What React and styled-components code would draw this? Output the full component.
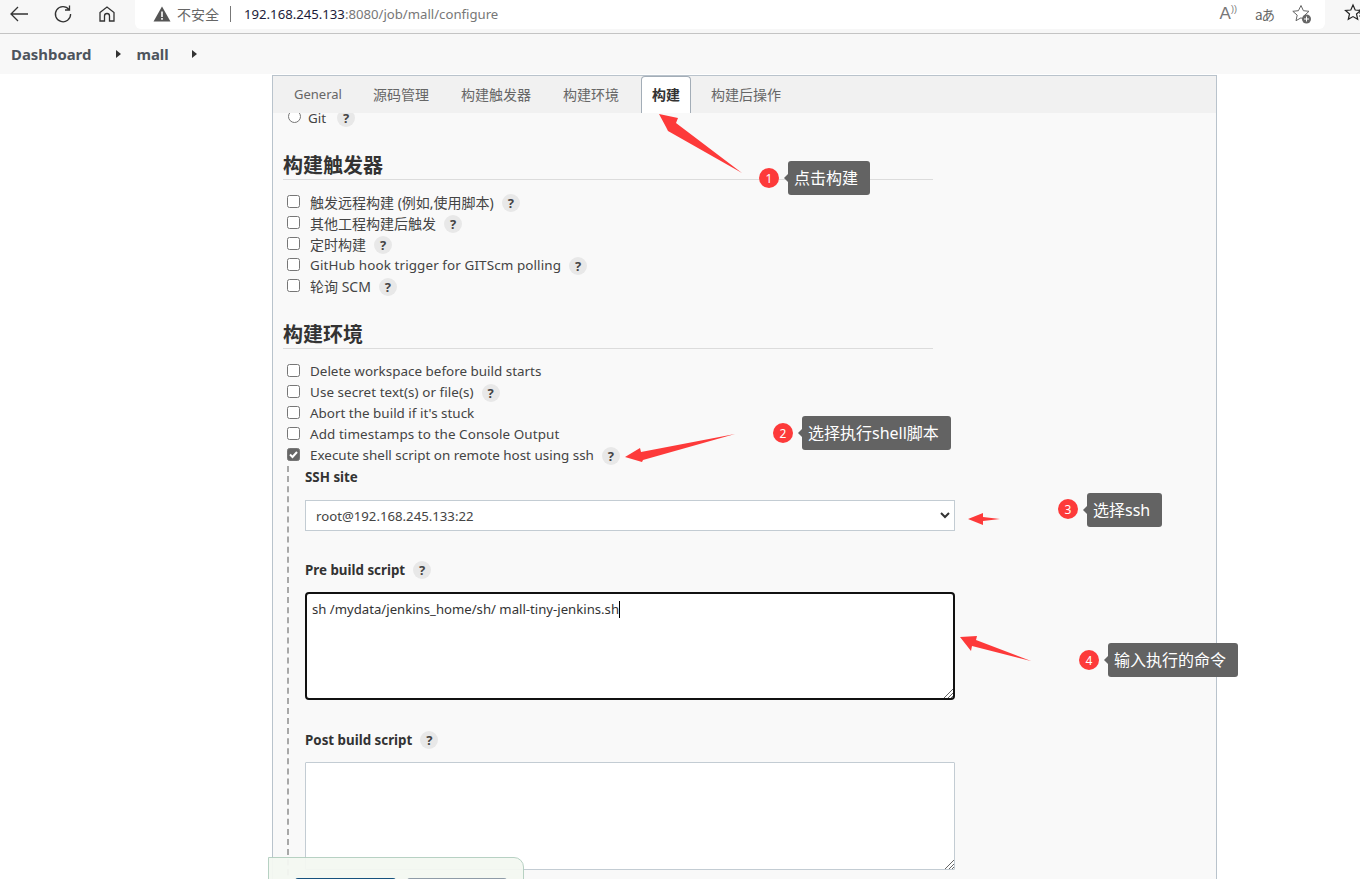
import React from "react";
import styled, { createGlobalStyle } from "styled-components";

const FONT = `"Noto Sans", "Noto Sans CJK SC", sans-serif`;

const Global = createGlobalStyle`
  html, body { margin: 0; padding: 0; height: 879px; overflow: hidden; background: #fff; }
  body { font-family: ${FONT}; font-size: 13.5px; color: #333; }
  * { box-sizing: border-box; }
`;

const Page = styled.div`position: relative; width: 1360px; height: 879px; overflow: hidden;`;
const BrowserBar = styled.header`
  height: 34px; background: #f7f7f7; border-bottom: 1px solid #c4c4c4;
  display: flex; align-items: flex-start; padding-left: 8px;
`;
const NavIcons = styled.div`display: flex; align-items: center; gap: 22px; height: 28px; width: 127px;`;
const NavIcon = styled.svg`width: 22px; height: 22px; fill: none; stroke: ${p => p.$c || "#333"}; stroke-width: 1.3; flex: none;`;
const AddressBar = styled.div`
  width: 1190px; height: 29px; background: #fff; border-radius: 0 0 6px 6px;
  display: flex; align-items: center; padding: 0 0 2px 18px; position: relative;
`;
const Insecure = styled.span`font-size: 14px; color: #666; margin-left: 6px;`;
const Sep = styled.span`width: 1px; height: 16px; background: #777; margin: 0 13px 0 11px;`;
const Host = styled.span`font-size: 13.17px; color: #1b1b3a;`;
const Path = styled.span`font-size: 13.17px; color: #777;`;
const AddrActions = styled.div`margin-left: auto; display: flex; align-items: center; gap: 17px; padding-right: 12px;`;
const ToolIcon = styled.svg`width: 22px; height: 22px; flex: none;`;
const Fav = styled.svg`position: absolute; right: -6px; top: 3px; width: 22px; height: 22px;`;
const AIcon = styled.span`font: 17px "Liberation Sans", sans-serif; color: #777; margin-right: 1px;`;
const TransIcon = styled.span`font: 13.5px "Noto Sans CJK JP", sans-serif; color: #666; letter-spacing: -1px;`;

const Crumbs = styled.nav`
  height: 40px; background: #f8f8f8; display: flex; align-items: center; padding-left: 11px;
  font-size: 14.9px; font-weight: 700; color: #4d545d;
`;
const Crumb = styled.span`margin-right: ${p => p.$gap}px;`;
const Caret = styled.span`
  width: 0; height: 0; border-left: 5px solid #333; border-top: 4px solid transparent; border-bottom: 4px solid transparent;
  margin-right: ${p => p.$gap}px;
`;

const Panel = styled.main`
  margin: 1px 0 0 272px; width: 945px; height: 840px; background: #f9f9f9;
  border: 1px solid #b9c3cc; border-bottom: 0;
`;
const TabBar = styled.div`
  height: 37px; background: #f1f1f1; display: flex; align-items: flex-end; padding-left: 5px; position: relative; z-index: 1;
`;
const Tab = styled.div`
  height: 37px; line-height: 37px; padding: 0 ${p => p.$latin ? 15 : 16}px 0 16px; font-size: ${p => p.$latin ? 13 : 14}px; color: #666; white-space: nowrap;
`;
const ActiveTab = styled(Tab)`
  background: #fff; font-weight: 700; color: #333; padding: 0 10px; margin: 0 4px 0 6px;
  border: 1px solid #a3adb7; border-bottom: 0; border-radius: 4px 4px 0 0; line-height: 35px; height: 37px;
`;
const Content = styled.div`padding: 0 0 0 10px;`;
const GitRow = styled.div`display: flex; align-items: center; height: 21px; margin-top: -6px; padding-left: 5px;`;
const Radio = styled.span`width: 13px; height: 13px; border: 1px solid #767676; border-radius: 50%; background: #fff; margin-top: -2px; flex: none;`;
const GitLabel = styled.span`margin-left: 7px; color: #444; font-size: 13.44px;`;
const SectionTitle = styled.h2`
  margin: ${p => p.$top}px 0 12px; width: 650px; height: 26px; font-size: 20px; font-weight: 700; line-height: 22px; color: #333;
  border-bottom: 1px solid #dcdcdc; font-family: "Noto Sans CJK SC", sans-serif;
`;
const Row = styled.div`display: flex; align-items: center; height: 21px; padding-left: 4px; white-space: nowrap;`;
const Box = styled.span`
  width: 13px; height: 13px; border: 1px solid #767676; border-radius: 2.5px; background: ${p => p.$on ? "#666" : "#fff"};
  flex: none; margin-top: -3px; display: flex; align-items: center; justify-content: center;
`;
const Label = styled.span`
  margin: -2px 0 0 10px; color: #444; font-size: ${p => p.$cjk ? 14 : 13.44}px; letter-spacing: ${p => p.$track || 0}px;
`;
const Help = styled.span`
  width: 18px; height: 18px; border-radius: 50%; background: #e8e8e8; margin-left: ${p => p.$gap ?? 8}px;
  display: inline-flex; align-items: center; justify-content: center; font-size: 13px; font-weight: 700; color: #444; flex: none;
`;
const Nested = styled.div`
  margin-left: 4px; border-left: 2px dashed #a8a8a8; padding: 1px 0 0 16px; height: 500px; width: 668px;
`;
const FieldLabel = styled.div`
  display: flex; align-items: center; height: 20px; font-size: 13.35px; font-weight: 700; color: #333; margin-top: ${p => p.$top}px;
`;
const SelectBox = styled.div`
  margin-top: 13px; width: 650px; height: 31px; background: #fff; border: 1px solid #c3ccd3;
  display: flex; align-items: center; justify-content: space-between; padding: 0 4px 0 10px; font-size: 13.2px; color: #444;
`;
const TextBox = styled.div`
  margin-top: 12px; width: 650px; height: 108px; background: #fff; position: relative;
  border: ${p => p.$focus ? "2px solid #111" : "1px solid #c3ccd3"}; border-radius: ${p => p.$focus ? 4 : 1}px;
  padding: 5px 5px; font-size: 13.17px; line-height: 20px; color: #333;
`;
const Cursor = styled.span`display: inline-block; width: 1px; height: 17px; background: #000; vertical-align: -4px;`;
const Grip = styled.svg`position: absolute; right: 0; bottom: 0; width: 10px; height: 10px; stroke: #666; stroke-width: 1;`;

const Footer = styled.div`
  position: absolute; left: 268px; top: 857px; width: 256px; height: 30px; background: #f4f8f2;
  opacity: .95; border: 1px solid #b4cfc0; border-radius: 0 10px 0 0; z-index: 3;
`;
const FooterButton = styled.span`
  position: absolute; top: 20px; left: ${p => p.$x}px; width: ${p => p.$w}px; height: 8px; background: ${p => p.$bg};
  border-radius: 3px 3px 0 0;
`;

const Tip = styled.div`
  position: absolute; left: ${p => p.$x}px; top: ${p => p.$y}px; z-index: 5;
  height: 34px; padding: 0 12px 2px 6px; background: #636363; color: #fff; border-radius: 3px;
  display: flex; align-items: center; font-size: 16px; white-space: nowrap;
  &::before {
    content: ""; position: absolute; left: -4px; top: 13px; border-right: 4px solid #636363;
    border-top: 4px solid transparent; border-bottom: 4px solid transparent;
  }
`;
const Dot = styled.div`
  position: absolute; left: ${p => p.$x}px; top: ${p => p.$y}px; z-index: 5; width: 20px; height: 20px; border-radius: 50%;
  background: #fd3a3a; color: #fff; font-size: 12px; display: flex; align-items: center; justify-content: center;
`;
const Arrows = styled.svg`position: absolute; left: 0; top: 0; width: 1360px; height: 879px; z-index: 4; pointer-events: none;`;

const Check = ({ on, cjk, track, children, help = true }) => (
  <Row>
    <Box $on={on}>
      {on && (
        <svg width="11" height="11" viewBox="0 0 11 11" fill="none" stroke="#fff" strokeWidth="2">
          <path d="M2 5.5 4.5 8 9 3" />
        </svg>
      )}
    </Box>
    <Label $cjk={cjk} $track={track}>{children}</Label>
    {help && <Help>?</Help>}
  </Row>
);

export default function App() {
  return (
    <Page>
      <Global />
      <BrowserBar>
        <NavIcons>
          <NavIcon viewBox="0 0 22 22"><path d="M20 11H3M10 4l-7 7 7 7" /></NavIcon>
          <NavIcon viewBox="0 0 22 22"><path d="M17 6.5A7.6 7.6 0 1 0 18.6 11M17.5 2.5v4.5H13" /></NavIcon>
          <NavIcon viewBox="0 0 22 22"><path d="M4 9.5 11 4l7 5.5V18h-4.5v-5a2.5 2.5 0 0 0-5 0v5H4Z" /></NavIcon>
        </NavIcons>
        <AddressBar>
          <svg width="18" height="16" viewBox="0 0 18 16"><path d="M9 0.5 17.5 15.5H0.5Z" fill="#555" /><path d="M8.2 5.5h1.6v5.5H8.2ZM8.2 12h1.6v1.7H8.2Z" fill="#fff" /></svg>
          <Insecure>不安全</Insecure>
          <Sep />
          <Host>192.168.245.133</Host><Path>:8080/job/mall/configure</Path>
          <AddrActions>
            <AIcon>A<span style={{ fontSize: 9, verticalAlign: 7 }}>))</span></AIcon>
            <TransIcon>aあ</TransIcon>
            <ToolIcon viewBox="0 0 22 22" fill="none">
              <path d="M10 2.5l2.4 5.2 5.6.6-4.2 3.8 1.2 5.6-5-2.9-5 2.9 1.2-5.6L1.8 8.3l5.6-.6Z" stroke="#666" />
              <circle cx="15.5" cy="16" r="4.5" fill="#666" />
              <path d="M13 16h5M15.5 13.5v5" stroke="#fff" />
            </ToolIcon>
          </AddrActions>
        </AddressBar>
        <Fav viewBox="0 0 22 22" fill="none" stroke="#222" strokeWidth="1.2">
          <path d="M9 2l2.2 5 5.3.5-4 3.5 1.2 5.3L9 13.6l-4.7 2.7L5.5 11l-4-3.5L6.8 7ZM15 7h7M15 10h7M15 13h7" />
        </Fav>
      </BrowserBar>

      <Crumbs>
        <Crumb $gap={25}>Dashboard</Crumb>
        <Caret $gap={15} />
        <Crumb $gap={23}>mall</Crumb>
        <Caret $gap={0} />
      </Crumbs>

      <Panel>
        <TabBar>
          <Tab $latin>General</Tab>
          <Tab>源码管理</Tab>
          <Tab>构建触发器</Tab>
          <Tab>构建环境</Tab>
          <ActiveTab>构建</ActiveTab>
          <Tab>构建后操作</Tab>
        </TabBar>
        <Content>
          <GitRow><Radio /><GitLabel>Git</GitLabel><Help $gap={11}>?</Help></GitRow>
          <SectionTitle $top={26}>构建触发器</SectionTitle>
          <Check cjk>触发远程构建 (例如,使用脚本)</Check>
          <Check cjk>其他工程构建后触发</Check>
          <Check cjk>定时构建</Check>
          <Check track={0.1}>GitHub hook trigger for GITScm polling</Check>
          <Check cjk>轮询 SCM</Check>
          <SectionTitle $top={26}>构建环境</SectionTitle>
          <Check help={false}>Delete workspace before build starts</Check>
          <Check track={0.06}>Use secret text(s) or file(s)</Check>
          <Check help={false}>Abort the build if it's stuck</Check>
          <Check help={false} track={0.08}>Add timestamps to the Console Output</Check>
          <Check on>Execute shell script on remote host using ssh</Check>
          <Nested>
            <FieldLabel $top={0}>SSH site</FieldLabel>
            <SelectBox>
              root@192.168.245.133:22
              <svg width="10" height="7" viewBox="0 0 10 7" fill="none" stroke="#333" strokeWidth="2"><path d="M1 1l4 4 4-4" /></svg>
            </SelectBox>
            <FieldLabel $top={29}>Pre build script<Help>?</Help></FieldLabel>
            <TextBox $focus>
              sh /mydata/jenkins_home/sh/ mall-tiny-jenkins.sh<Cursor />
              <Grip viewBox="0 0 10 10"><path d="M10 1 1 10M10 5 5 10M10 8 8 10" /></Grip>
            </TextBox>
            <FieldLabel $top={30}>Post build script<Help>?</Help></FieldLabel>
            <TextBox>
              <Grip viewBox="0 0 10 10"><path d="M10 1 1 10M10 5 5 10M10 8 8 10" /></Grip>
            </TextBox>
          </Nested>
        </Content>
      </Panel>

      <Footer>
        <FooterButton $x={26} $w={101} $bg="#0b4a78" />
        <FooterButton $x={138} $w={100} $bg="#8a98a4" />
      </Footer>

      <Arrows viewBox="0 0 1360 879" fill="#fd3a3a">
        <path d="M659 114 678 118 676 123 742 173 668 131 666 127Z" />
        <path d="M625 457 640 448 641 452 735 434 643 460 642 462Z" />
        <path d="M968 519 983 513 983 517 1000 519 983 521 983 525Z" />
        <path d="M960 637 977 636 976 640 1031 661 972 646 971 651Z" />
      </Arrows>

      <Dot $x={759} $y={168}>1</Dot>
      <Tip $x={788} $y={161}>点击构建</Tip>
      <Dot $x={773} $y={423}>2</Dot>
      <Tip $x={802} $y={416}>选择执行shell脚本</Tip>
      <Dot $x={1058} $y={499}>3</Dot>
      <Tip $x={1087} $y={493}>选择ssh</Tip>
      <Dot $x={1079} $y={650}>4</Dot>
      <Tip $x={1108} $y={643}>输入执行的命令</Tip>
    </Page>
  );
}
